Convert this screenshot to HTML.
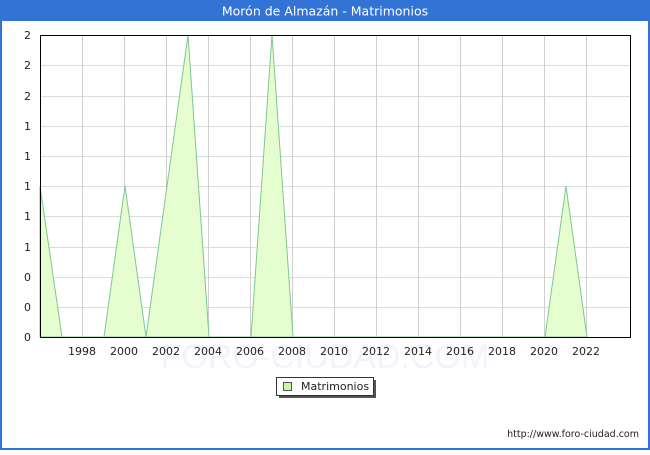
<!DOCTYPE html>
<html><head><meta charset="utf-8"><style>
body{margin:0;width:650px;height:450px;overflow:hidden;background:#fff}
</style></head><body>
<svg width="650" height="450" xmlns="http://www.w3.org/2000/svg" font-family="'DejaVu Sans', 'Liberation Sans', sans-serif">
<rect x="0" y="0" width="650" height="450" fill="#3473d6"/>
<rect x="2" y="21" width="646" height="427" fill="#fff"/>
<text x="325" y="15.5" fill="#fff" font-size="12.5" text-anchor="middle">Morón de Almazán - Matrimonios</text>
<g stroke="#dcdcdc" stroke-width="1">
<line x1="40" y1="65.5" x2="630" y2="65.5"/><line x1="40" y1="96.5" x2="630" y2="96.5"/>
<line x1="40" y1="126.5" x2="630" y2="126.5"/><line x1="40" y1="156.5" x2="630" y2="156.5"/>
<line x1="40" y1="186.5" x2="630" y2="186.5"/><line x1="40" y1="216.5" x2="630" y2="216.5"/>
<line x1="40" y1="247.5" x2="630" y2="247.5"/><line x1="40" y1="277.5" x2="630" y2="277.5"/>
<line x1="40" y1="307.5" x2="630" y2="307.5"/>
</g>
<g stroke="#cfcfcf">
<line x1="82.5" y1="35" x2="82.5" y2="337"/><line x1="124.5" y1="35" x2="124.5" y2="337"/>
<line x1="166.5" y1="35" x2="166.5" y2="337"/><line x1="208.5" y1="35" x2="208.5" y2="337"/>
<line x1="250.5" y1="35" x2="250.5" y2="337"/><line x1="292.5" y1="35" x2="292.5" y2="337"/>
<line x1="334.5" y1="35" x2="334.5" y2="337"/><line x1="376.5" y1="35" x2="376.5" y2="337"/>
<line x1="418.5" y1="35" x2="418.5" y2="337"/><line x1="460.5" y1="35" x2="460.5" y2="337"/>
<line x1="502.5" y1="35" x2="502.5" y2="337"/><line x1="544.5" y1="35" x2="544.5" y2="337"/>
<line x1="586.5" y1="35" x2="586.5" y2="337"/>
</g>
<text x="325" y="368" font-size="34" fill="#f2f3fb" text-anchor="middle" font-family="'Liberation Sans',sans-serif">FORO-CIUDAD.COM</text>
<polygon fill="#e6fdd0" stroke="#7cc890" stroke-width="1" points="40,186 62,337 104,337 125,186 146,337 188,35 209,337 251,337 272,35 293,337 545,337 566,186 587,337 40,337"/>
<rect x="40.5" y="35.5" width="590" height="302" fill="none" stroke="#000"/>
<g font-size="11" fill="#222" text-anchor="end">
<text x="31" y="39">2</text><text x="31" y="69">2</text><text x="31" y="100">2</text>
<text x="31" y="130">1</text><text x="31" y="160">1</text><text x="31" y="190">1</text>
<text x="31" y="220">1</text><text x="31" y="251">1</text><text x="31" y="281">0</text>
<text x="31" y="311">0</text><text x="31" y="341">0</text>
</g>
<g font-size="11" fill="#222" text-anchor="middle">
<text x="82" y="355">1998</text><text x="124" y="355">2000</text><text x="166" y="355">2002</text>
<text x="208" y="355">2004</text><text x="250" y="355">2006</text><text x="292" y="355">2008</text>
<text x="334" y="355">2010</text><text x="376" y="355">2012</text><text x="418" y="355">2014</text>
<text x="460" y="355">2016</text><text x="502" y="355">2018</text><text x="544" y="355">2020</text>
<text x="586" y="355">2022</text>
</g>
<rect x="279" y="380" width="97" height="18" fill="#555"/>
<rect x="276.5" y="377.5" width="97" height="18" fill="#fff" stroke="#333"/>
<rect x="283.5" y="382.5" width="8" height="8" fill="#ccf5a8" stroke="#555"/>
<text x="301" y="390" font-size="11" fill="#222">Matrimonios</text>
<text x="639" y="437" font-size="9.5" fill="#222" text-anchor="end">http://www.foro-ciudad.com</text>
</svg>
</body></html>
